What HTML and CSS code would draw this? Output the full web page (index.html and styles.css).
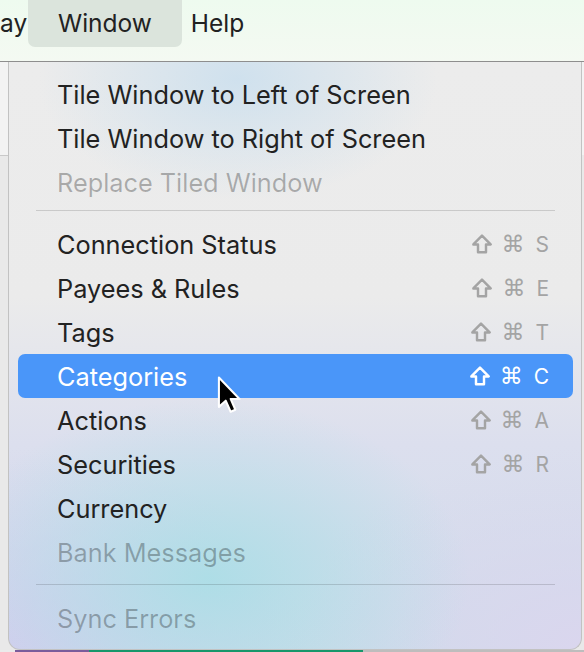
FILE: index.html
```html
<!DOCTYPE html>
<html lang="en">

<head>
  <meta charset="UTF-8">
  <meta name="viewport" content="width=device-width, initial-scale=1.0">
  <title>Window menu</title>
  <link rel="stylesheet" href="styles.css">
</head>

<body>
  <header class="menubar">
    <span class="menubar_item cut">ay</span>
    <span class="menubar_item active">Window</span>
    <span class="menubar_item">Help</span>
  </header>

  <main class="desktop">
    <nav class="menu">
      <div class="menu_item">Tile Window to Left of Screen</div>
      <div class="menu_item">Tile Window to Right of Screen</div>
      <div class="menu_item disabled">Replace Tiled Window</div>
      <div class="separator top"></div>
      <div class="menu_item">Connection Status
        <span class="keys"><svg class="shift" viewBox="0 0 18 18"><path d="M9 1.4 L16.8 9.4 L12.6 9.4 L12.6 16.4 L5.4 16.4 L5.4 9.4 L1.2 9.4 Z" /></svg><i>⌘</i><b>S</b></span>
      </div>
      <div class="menu_item">Payees &amp; Rules
        <span class="keys"><svg class="shift" viewBox="0 0 18 18"><path d="M9 1.4 L16.8 9.4 L12.6 9.4 L12.6 16.4 L5.4 16.4 L5.4 9.4 L1.2 9.4 Z" /></svg><i>⌘</i><b>E</b></span>
      </div>
      <div class="menu_item">Tags
        <span class="keys"><svg class="shift" viewBox="0 0 18 18"><path d="M9 1.4 L16.8 9.4 L12.6 9.4 L12.6 16.4 L5.4 16.4 L5.4 9.4 L1.2 9.4 Z" /></svg><i>⌘</i><b>T</b></span>
      </div>
      <div class="menu_item selected">Categories
        <span class="keys"><svg class="shift" viewBox="0 0 18 18"><path d="M9 1.4 L16.8 9.4 L12.6 9.4 L12.6 16.4 L5.4 16.4 L5.4 9.4 L1.2 9.4 Z" /></svg><i>⌘</i><b>C</b></span>
        <svg class="cursor" width="26" height="38" viewBox="0 0 16 24">
          <path d="M1 1 L1 19.5 L5.3 15.6 L8.4 22.6 L11.4 21.3 L8.4 14.5 L14 14.5 Z" fill="#000" stroke="#fff"
            stroke-width="1.3" stroke-linejoin="round" />
        </svg>
      </div>
      <div class="menu_item">Actions
        <span class="keys"><svg class="shift" viewBox="0 0 18 18"><path d="M9 1.4 L16.8 9.4 L12.6 9.4 L12.6 16.4 L5.4 16.4 L5.4 9.4 L1.2 9.4 Z" /></svg><i>⌘</i><b>A</b></span>
      </div>
      <div class="menu_item">Securities
        <span class="keys"><svg class="shift" viewBox="0 0 18 18"><path d="M9 1.4 L16.8 9.4 L12.6 9.4 L12.6 16.4 L5.4 16.4 L5.4 9.4 L1.2 9.4 Z" /></svg><i>⌘</i><b>R</b></span>
      </div>
      <div class="menu_item">Currency</div>
      <div class="menu_item disabled">Bank Messages</div>
      <div class="separator bottom"></div>
      <div class="menu_item disabled">Sync Errors</div>
    </nav>
  </main>
</body>

</html>
```

FILE: styles.css
```css
html,
body {
  width: 100%;
  height: 100%;
  overflow: hidden;
}

body {
  margin: 0;
  font-family: 'Inter', 'Noto Sans', sans-serif;
  color: #222;
  background: #ebebeb;
}

.menubar {
  display: flex;
  align-items: flex-start;
  height: 61px;
  border-bottom: 1px solid #8e8e8e;
  background: linear-gradient(#eefbef, #f4f9f2);
  font-size: 24.5px;
}

.menubar_item {
  height: 47px;
  line-height: 47px;
}

.menubar_item.cut {
  width: 28px;
}

.menubar_item.active {
  padding: 0 30px;
  background: #dbe4dc;
  border-radius: 0 0 7px 7px;
}

.menubar_item:last-child {
  margin-left: 9px;
}

.desktop {
  height: 590px;
  padding-left: 8px;
  background:
    linear-gradient(to right, #ebebeb 15px, #7a5c9b 15px 89px, #17976b 89px 363px, #bdbdbd 363px) bottom / 100% 2px no-repeat,
    linear-gradient(#c9c9c9, #c9c9c9) 0 93px / 8px 1px no-repeat,
    linear-gradient(#f3f3f3 93px, #e9e9e9 93px);
}

.menu {
  position: relative;
  width: 574px;
  height: 588px;
  box-sizing: border-box;
  padding: 10px 8px 0 9px;
  border: 1px solid #c2c2c2;
  border-top: none;
  border-radius: 0 0 12px 12px;
  background:
    radial-gradient(ellipse 200px 120px at 40% 3%, rgba(200, 222, 238, 0.8), transparent),
    radial-gradient(ellipse 260px 180px at 35% 88%, rgba(170, 222, 230, 0.9), transparent),
    radial-gradient(ellipse 300px 200px at 0% 100%, rgba(212, 206, 238, 1), transparent),
    radial-gradient(ellipse 300px 200px at 100% 100%, rgba(218, 214, 238, 1), transparent),
    linear-gradient(#ececec 0, #ebebeb 40%, #dcdfee 65%, #cfdcea 100%);
  font-size: 25.3px;
}

.menu_item {
  position: relative;
  display: flex;
  align-items: center;
  justify-content: space-between;
  height: 44px;
  padding: 0 24px 0 39px;
  border-radius: 7px;
  white-space: nowrap;
}

.menu_item.disabled {
  color: rgba(0, 0, 0, 0.28);
}

.menu_item.selected {
  background: #4a96f9;
  color: #fff;
}

.keys {
  display: flex;
  align-items: center;
  color: #a4a4a4;
  font-size: 21px;
}

.selected .keys {
  color: #fff;
}

.shift {
  width: 20px;
  height: 20px;
  fill: none;
  stroke: currentColor;
  stroke-width: 2.2;
  stroke-linejoin: round;
}

.keys i {
  margin-left: 10px;
  font-style: normal;
  font-size: 23px;
  font-family: 'DejaVu Sans', sans-serif;
}

.keys b {
  margin-left: 11px;
  font-weight: normal;
}

.separator {
  height: 1px;
  margin: 0 18px;
  background: rgba(0, 0, 0, 0.14);
}

.separator.top {
  margin-top: 6px;
  margin-bottom: 11px;
}

.separator.bottom {
  margin-top: 10px;
  margin-bottom: 11px;
}

.cursor {
  position: absolute;
  left: 199px;
  top: 22px;
}
```
